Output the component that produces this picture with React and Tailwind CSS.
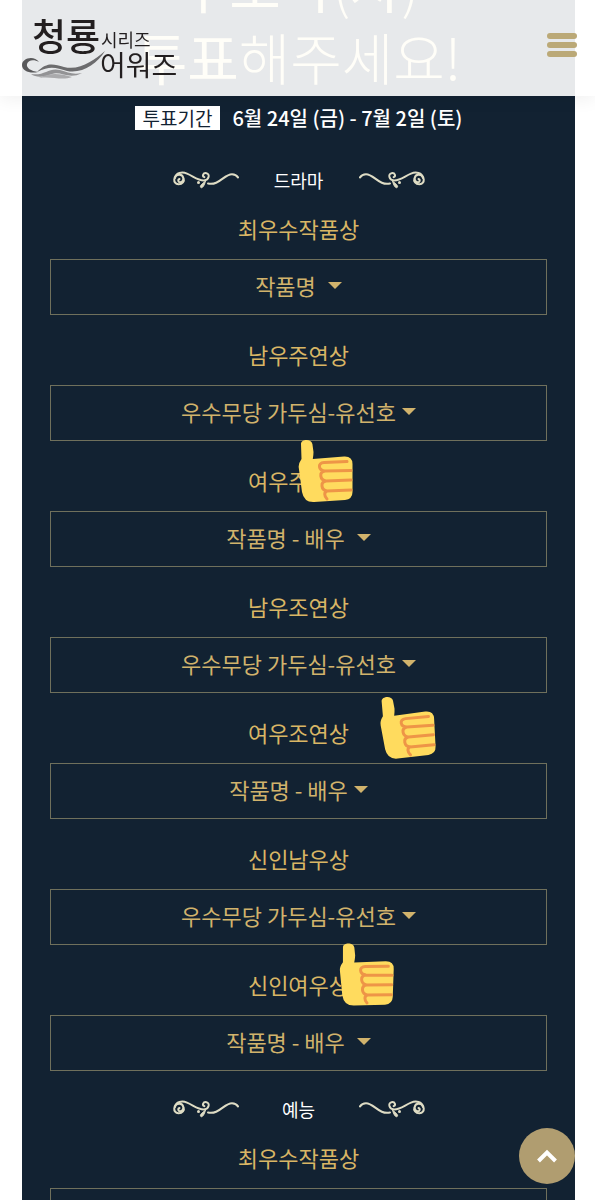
const categories = [
  { title: '최우수작품상', value: '작품명', wide: true },
  { title: '남우주연상', value: '우수무당 가두심-유선호' },
  { title: '여우주연상', value: '작품명 - 배우', wide: true, thumb: 'left-[248px] -top-7' },
  { title: '남우조연상', value: '우수무당 가두심-유선호' },
  { title: '여우조연상', value: '작품명 - 배우', thumb: 'left-[330px] -top-6 -rotate-3' },
  { title: '신인남우상', value: '우수무당 가두심-유선호' },
  { title: '신인여우상', value: '작품명 - 배우', wide: true, thumb: 'left-[289px] -top-7 rotate-2' },
];

function Flourish({ flip }) {
  return (
    <svg
      viewBox="0 0 66 20"
      className={flip ? 'h-5 w-[66px] -scale-x-100' : 'h-5 w-[66px]'}
      fill="none"
      stroke="#dedcc4"
      strokeLinecap="round"
      aria-hidden="true"
    >
      <path d="M6.500 9C4.600 9.600 5 12.600 7.600 12.200C11.800 11.600 11 4.600 6.400 4.800C0 5-.6 14 5.400 14.200C9.600 14.300 11.600 11 10.600 8.400" strokeWidth="2" />
      <path d="M2 8C3 2.600 9 1.600 14 3.600C20 6 25 10.600 31 10.400C36 10.200 37.400 4 33.400 3.200C30 2.600 28.800 6 31.400 7.200" strokeWidth="2" />
      <path d="M35 13.500C46 16 51 4.200 59 4.200C62 4.200 64 5.800 65 7.400" strokeWidth="2" />
      <path d="M32.500 11C30.500 13 27 15 27.400 17C28.400 18.800 31 17.400 32.500 11Z" fill="#dedcc4" strokeWidth="1" />
      <circle cx="25.500" cy="12.400" r="1.500" fill="#dedcc4" stroke="none" />
    </svg>
  );
}

function SectionTitle({ children }) {
  return (
    <div className="flex h-6 items-center justify-center">
      <Flourish />
      <h2 className="w-[120px] text-center text-[18px] leading-6 text-white">{children}</h2>
      <Flourish flip />
    </div>
  );
}

function Thumb({ className }) {
  return (
    <svg viewBox="0 0 56 64" className={`pointer-events-none absolute z-10 h-16 w-14 ${className}`} aria-hidden="true">
      <path
        d="M3 5C3 0 13.500-.5 14.400 5L15.500 13Q15.500 16 14.800 20L46 17.500Q54.500 17 54.500 25V53Q54.500 60 47 61L16 63Q6 63.500 4 53L.8 29Q0 25 3.500 20Z"
        fill="#ffdb5e"
      />
      <path
        d="M49 22.500L26 23.500C19 24 20.500 31.500 27 32L53 31.500M27 32C20.500 33 22 41 28 42L53 41M28 42C22 43 23 51 29 52L53 51M29 52C26 53 26 57 29 60"
        fill="none"
        stroke="#ee9547"
        strokeWidth="3"
        strokeLinecap="round"
      />
    </svg>
  );
}

function Award({ title, value, wide, thumb }) {
  return (
    <section className="relative">
      <h3 className="h-[30px] text-center text-[22px] leading-[26px] text-[#d9b665]">{title}</h3>
      {thumb && <Thumb className={thumb} />}
      <button
        type="button"
        className={`mt-[14px] flex h-14 w-full items-center justify-center border border-[#6f705c] pb-1 text-[22px] text-[#d1b36c] ${wide ? 'gap-3' : 'gap-[6px]'}`}
      >
        <span>{value}</span>
        <svg viewBox="0 0 14 7" className="h-[7px] w-[14px]" fill="currentColor" aria-hidden="true">
          <path d="M0 0H14L7 7Z" />
        </svg>
      </button>
    </section>
  );
}

function Logo() {
  return (
    <a href="#home" aria-label="청룡시리즈어워즈">
      <svg viewBox="0 0 158 68" className="h-[68px] w-[158px]" fill="#231f20">
        <path d="M17 48C12 41 0 44 0 51C0 57 8 60 16 58C9 57 4 54 5 50C6 46 12 45 17 48Z" fill="#59595b" />
        <path d="M15 58C25 48 31 50 42 53C58 57 72 46 83 37C75 50 60 60 45 57C34 54 29 51 15 58Z" fill="#6c6c6e" />
        <path d="M9 60C23 62 27 53 38 56C46 58 50 61 60 59C47 66 39 57 30 60C23 63 14 64 9 60Z" fill="#939395" />
        <path d="M17 64C30 58 38 60 50 63C40 67 30 62 17 64Z" fill="#aaaaac" />
        <text x="10" y="37" fontSize="37" fontWeight="500">청룡</text>
        <text x="79" y="33" fontSize="18">시리즈</text>
        <text x="78" y="62" fontSize="28">어워즈</text>
      </svg>
    </a>
  );
}

export default function App() {
  return (
    <div className="h-screen overflow-hidden bg-white font-['Noto_Sans_CJK_KR','Noto_Sans',sans-serif]">
      <header className="fixed inset-x-0 top-0 z-20 flex h-24 items-start justify-between bg-white/90 pr-[18px] pl-[22px] shadow-[0_4px_16px_rgba(0,0,0,0.06)]">
        <div className="pt-[14px]">
          <Logo />
        </div>
        <button type="button" aria-label="메뉴" className="mt-[33px] flex w-[30px] flex-col gap-[3px]">
          <span className="h-[6px] rounded-sm bg-[#bba977]" />
          <span className="h-[6px] rounded-sm bg-[#bba977]" />
          <span className="h-[6px] rounded-sm bg-[#bba977]" />
        </button>
      </header>

      <main className="mr-5 ml-[22px] flow-root min-h-screen bg-[#122232] px-7">
        <h1 className="flex h-24 flex-col justify-end pb-1 text-center text-[56px] leading-[72px] font-light whitespace-nowrap text-[#ffeeb4]">
          <span>
            <b>후보작</b>(<b>자</b>)
          </span>
          <span>
            <b>투표</b>해주세요!
          </span>
        </h1>
        <p className="flex h-11 items-center justify-center gap-3 text-[20px] whitespace-nowrap text-white">
          <span className="bg-white px-2 text-[19px] leading-6 text-[#122232]">투표기간</span>
          <span className="font-medium">6월 24일 (금) - 7월 2일 (토)</span>
        </p>
        <div className="mt-7">
          <SectionTitle>드라마</SectionTitle>
        </div>
        <div className="mt-[23px] flex flex-col gap-[26px]">
          {categories.map((item) => (
            <Award key={item.title} {...item} />
          ))}
        </div>
        <div className="mt-[26px]">
          <SectionTitle>예능</SectionTitle>
        </div>
        <div className="mt-[23px]">
          <Award title="최우수작품상" value="작품명" wide />
        </div>
      </main>

      <button
        type="button"
        aria-label="맨 위로"
        className="fixed right-5 bottom-4 z-20 flex size-14 items-center justify-center rounded-full bg-[#b09d70]"
      >
        <svg viewBox="0 0 20 14" className="h-[14px] w-5" fill="none" stroke="#fff" strokeWidth="4" aria-hidden="true">
          <path d="M1.500 12L10 3.500L18.500 12" />
        </svg>
      </button>
    </div>
  );
}
